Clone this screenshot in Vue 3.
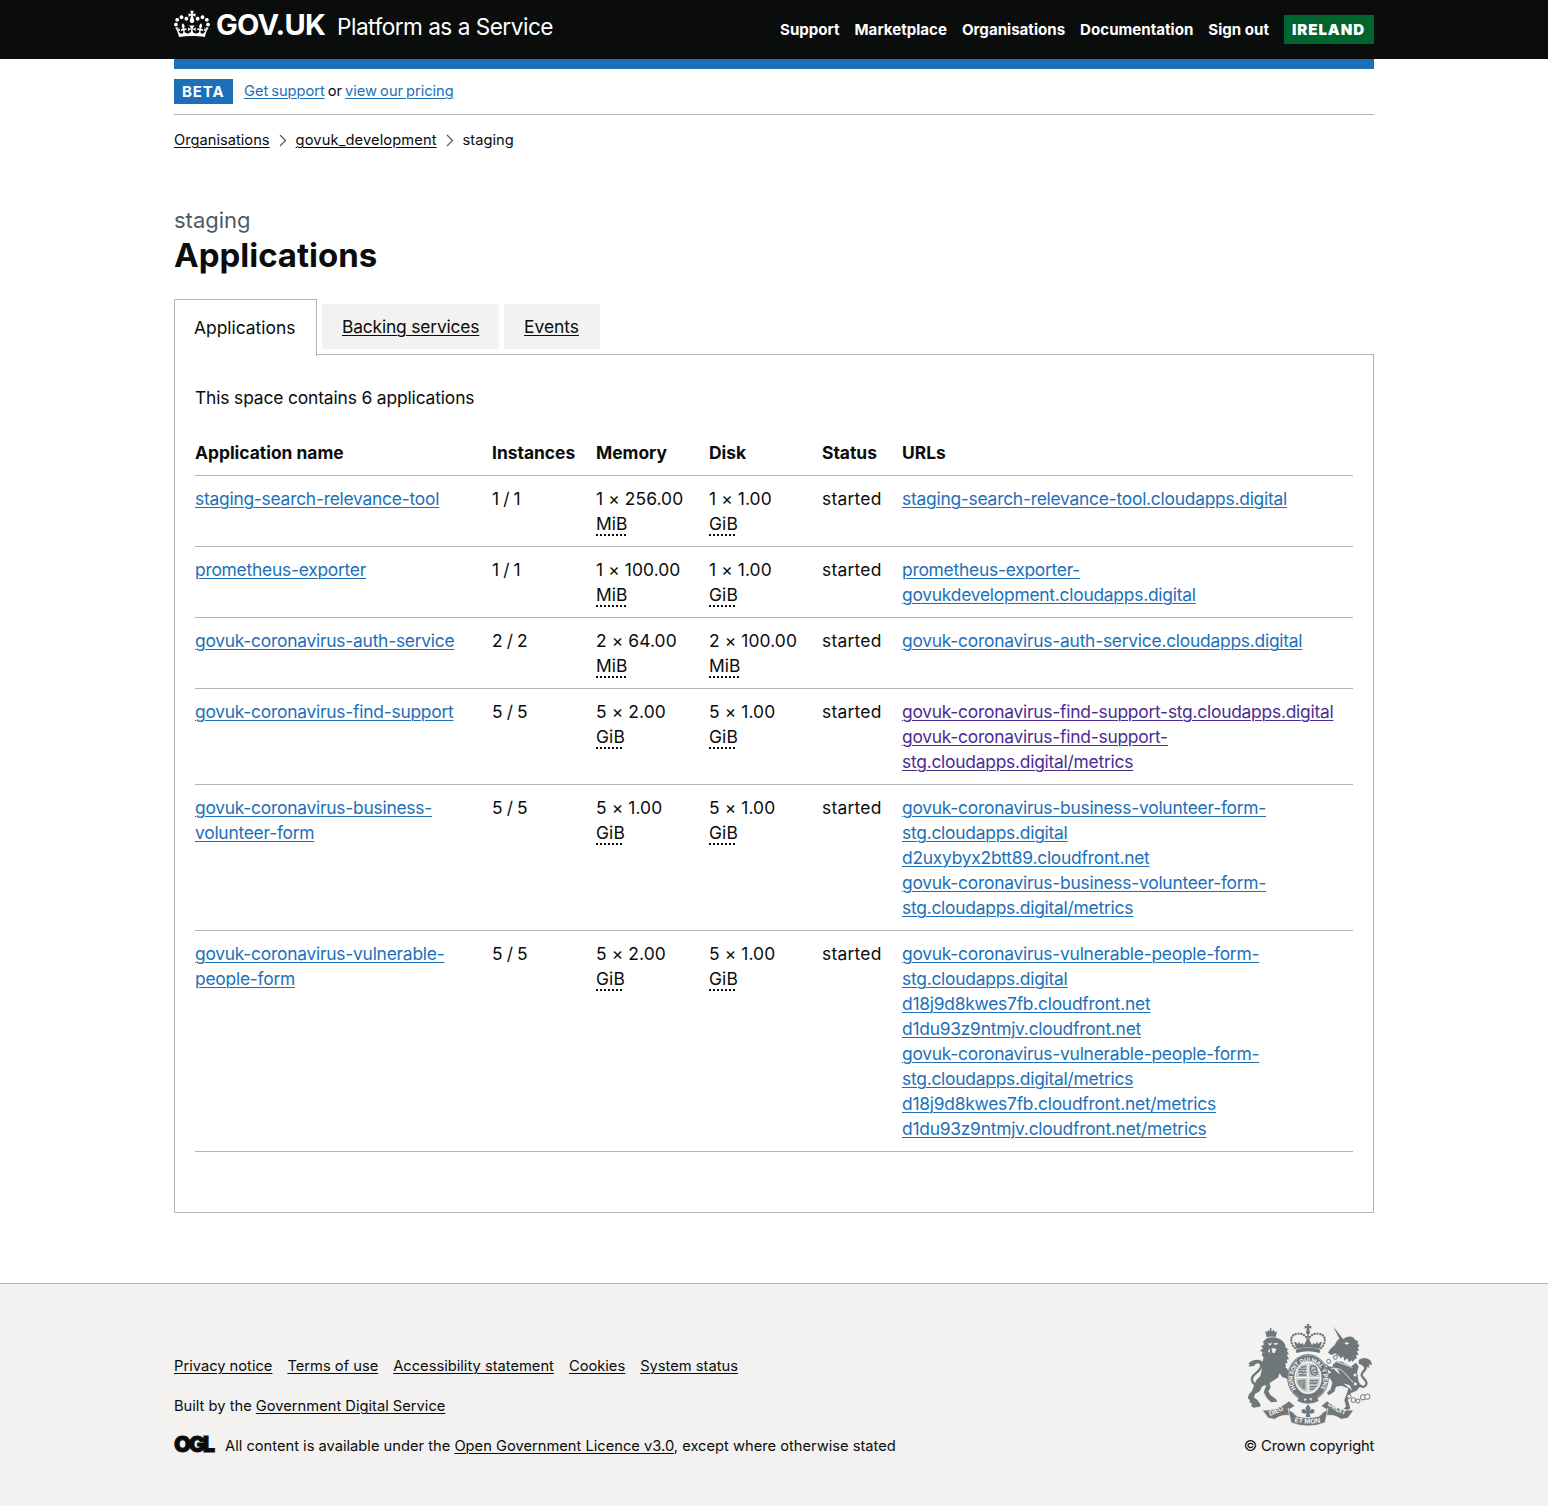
<script setup>
const navigation = ['Support', 'Marketplace', 'Organisations', 'Documentation', 'Sign out']
const footerLinks = ['Privacy notice', 'Terms of use', 'Accessibility statement', 'Cookies', 'System status']
const columns = ['Application name', 'Instances', 'Memory', 'Disk', 'Status', 'URLs']

const applications = [
  {
    name: 'staging-search-relevance-tool',
    instances: '1 / 1',
    memory: ['1 × 256.00', 'MiB'],
    disk: ['1 × 1.00', 'GiB'],
    urls: ['staging-search-relevance-tool.cloudapps.digital'],
  },
  {
    name: 'prometheus-exporter',
    instances: '1 / 1',
    memory: ['1 × 100.00', 'MiB'],
    disk: ['1 × 1.00', 'GiB'],
    urls: ['prometheus-exporter-govukdevelopment.cloudapps.digital'],
  },
  {
    name: 'govuk-coronavirus-auth-service',
    instances: '2 / 2',
    memory: ['2 × 64.00', 'MiB'],
    disk: ['2 × 100.00', 'MiB'],
    urls: ['govuk-coronavirus-auth-service.cloudapps.digital'],
  },
  {
    name: 'govuk-coronavirus-find-support',
    instances: '5 / 5',
    memory: ['5 × 2.00', 'GiB'],
    disk: ['5 × 1.00', 'GiB'],
    visited: true,
    urls: [
      'govuk-coronavirus-find-support-stg.cloudapps.digital',
      'govuk-coronavirus-find-support-stg.cloudapps.digital/metrics',
    ],
  },
  {
    name: 'govuk-coronavirus-business-volunteer-form',
    instances: '5 / 5',
    memory: ['5 × 1.00', 'GiB'],
    disk: ['5 × 1.00', 'GiB'],
    urls: [
      'govuk-coronavirus-business-volunteer-form-stg.cloudapps.digital',
      'd2uxybyx2btt89.cloudfront.net',
      'govuk-coronavirus-business-volunteer-form-stg.cloudapps.digital/metrics',
    ],
  },
  {
    name: 'govuk-coronavirus-vulnerable-people-form',
    instances: '5 / 5',
    memory: ['5 × 2.00', 'GiB'],
    disk: ['5 × 1.00', 'GiB'],
    urls: [
      'govuk-coronavirus-vulnerable-people-form-stg.cloudapps.digital',
      'd18j9d8kwes7fb.cloudfront.net',
      'd1du93z9ntmjv.cloudfront.net',
      'govuk-coronavirus-vulnerable-people-form-stg.cloudapps.digital/metrics',
      'd18j9d8kwes7fb.cloudfront.net/metrics',
      'd1du93z9ntmjv.cloudfront.net/metrics',
    ],
  },
]
</script>

<template>
  <div class="page">
    <header class="header">
      <div class="container header-inner">
        <a class="logo" href="#">
          <svg class="crown" viewBox="0 0 132 97" width="36" height="32" fill="currentColor" aria-hidden="true">
            <path fill-rule="evenodd" d="M25 30.2c3.5 1.5 7.7-.2 9.1-3.7 1.5-3.6-.2-7.8-3.9-9.2-3.6-1.4-7.6.3-9.1 3.9-1.4 3.5.3 7.5 3.9 9zM9 39.5c3.6 1.5 7.8-.2 9.2-3.7 1.5-3.6-.2-7.8-3.9-9.1-3.6-1.5-7.6.2-9.1 3.8-1.4 3.5.3 7.5 3.8 9zM4.4 57.2c3.5 1.5 7.7-.2 9.1-3.8 1.5-3.6-.2-7.7-3.9-9.1-3.5-1.5-7.6.3-9.1 3.8-1.4 3.5.3 7.6 3.9 9.1zm38.3-21.4c3.5 1.5 7.7-.2 9.1-3.8 1.5-3.6-.2-7.7-3.9-9.1-3.6-1.5-7.6.3-9.1 3.8-1.3 3.6.4 7.7 3.9 9.1zm64.4-5.6c-3.6 1.5-7.8-.2-9.1-3.7-1.5-3.6.2-7.8 3.8-9.2 3.6-1.4 7.7.3 9.2 3.9 1.3 3.5-.4 7.5-3.9 9zm15.9 9.3c-3.6 1.5-7.7-.2-9.1-3.7-1.5-3.6.2-7.8 3.7-9.1 3.6-1.5 7.7.2 9.2 3.8 1.5 3.5-.3 7.5-3.8 9zm4.7 17.7c-3.6 1.5-7.8-.2-9.2-3.8-1.5-3.6.2-7.7 3.9-9.1 3.6-1.5 7.7.3 9.2 3.8 1.3 3.5-.4 7.6-3.9 9.1zM89.3 35.8c-3.6 1.5-7.8-.2-9.2-3.8-1.4-3.6.2-7.7 3.9-9.1 3.6-1.5 7.7.3 9.2 3.8 1.4 3.6-.3 7.7-3.9 9.1zM69.7 17.7l8.9 4.7V9.3l-8.9 2.8c-.2-.3-.5-.6-.9-.9L72.4 0H59.6l3.5 11.2c-.3.3-.6.5-.9.9l-8.8-2.8v13.1l8.8-4.7c.3.3.6.7.9.9l-5 15.4v.1c-.2.8-.4 1.6-.4 2.4 0 4.1 3.1 7.5 7 8.1h.2c.3 0 .7.1 1 .1.4 0 .7 0 1-.1h.2c4-.6 7.1-4.1 7.1-8.1 0-.8-.1-1.7-.4-2.4V34l-5.1-15.4c.4-.2.7-.6 1-.9zM66 92.8c16.9 0 32.8 1.1 47.1 3.2 4-16.9 8.9-26.7 14-33.5l-9.6-3.4c1 4.9 1.1 7.2 0 10.2-1.5-1.4-3-4.3-4.2-8.7L108.6 76c2.8-2 5-3.2 7.5-3.3-4.4 9.4-10 11.9-13.6 11.2-4.3-.8-6.3-4.6-5.6-7.9 1-4.7 5.7-5.9 8-.5 4.3-8.7-3-11.4-7.6-8.8 7.1-7.2 7.9-13.5 2.1-21.1-8 6.1-8.1 12.3-4.5 20.8-4.7-5.4-12.1-2.5-9.5 6.2 3.4-5.2 7.9-2 7.2 3.1-.6 4.3-6.4 7.8-13.5 7.2-10.3-.9-10.9-8-11.2-13.8 2.5-.5 7.1 1.8 11 7.3L80.2 60c-4.1 4.4-8 5.3-12.3 5.4 1.4-4.4 8-11.6 8-11.6H55.5s6.4 7.2 7.9 11.6c-4.2-.1-8-1-12.3-5.4l1.4 16.4c3.9-5.5 8.5-7.7 10.9-7.3-.3 5.8-.9 12.8-11.1 13.8-7.2.6-12.9-2.9-13.5-7.2-.7-5 3.8-8.3 7.1-3.1 2.7-8.7-4.6-11.6-9.4-6.2 3.7-8.5 3.6-14.7-4.6-20.8-5.8 7.6-5 13.9 2.2 21.1-4.7-2.6-11.9.1-7.7 8.8 2.3-5.5 7.1-4.2 8.1.5.7 3.3-1.3 7.1-5.7 7.9-3.5.7-9-1.8-13.5-11.2 2.5.1 4.7 1.3 7.5 3.3l-4.7-15.4c-1.2 4.4-2.7 7.2-4.3 8.7-1.1-3-.9-5.3 0-10.2l-9.5 3.4c5 6.9 9.9 16.7 14 33.5 14.8-2.1 30.8-3.2 47.7-3.2z" />
          </svg>
          <span class="wordmark">GOV.UK</span>
          <span class="product">Platform as a Service</span>
        </a>
        <nav class="navigation">
          <a v-for="item in navigation" :key="item" href="#">{{ item }}</a>
          <strong class="region">IRELAND</strong>
        </nav>
      </div>
    </header>

    <div class="container">
      <div class="phase">
        <strong class="phase-tag">BETA</strong>
        <span class="phase-text"><a class="link" href="#">Get support</a> or <a class="link" href="#">view our pricing</a></span>
      </div>

      <nav class="breadcrumbs">
        <a href="#">Organisations</a>
        <svg width="8" height="13" viewBox="0 0 8 13" aria-hidden="true"><path d="M1 1l5.5 5.5L1 12" /></svg>
        <a class="crumb-org" href="#">govuk_development</a>
        <svg width="8" height="13" viewBox="0 0 8 13" aria-hidden="true"><path d="M1 1l5.5 5.5L1 12" /></svg>
        <span>staging</span>
      </nav>

      <main>
        <h1><span class="caption">staging</span> Applications</h1>

        <div class="tabs">
          <a class="tab tab-selected" href="#">Applications</a>
          <a class="tab tab-services" href="#">Backing services</a>
          <a class="tab tab-events" href="#">Events</a>
        </div>

        <section class="panel">
          <p class="summary">This space contains 6 applications</p>
          <table>
            <colgroup>
              <col class="col-name" />
              <col class="col-instances" />
              <col class="col-size" />
              <col class="col-size" />
              <col class="col-status" />
              <col />
            </colgroup>
            <thead>
              <tr>
                <th v-for="column in columns" :key="column">{{ column }}</th>
              </tr>
            </thead>
            <tbody>
              <tr v-for="app in applications" :key="app.name">
                <td class="names"><a class="link" href="#">{{ app.name }}</a></td>
                <td class="count">{{ app.instances }}</td>
                <td>{{ app.memory[0] }}<br /><abbr>{{ app.memory[1] }}</abbr></td>
                <td>{{ app.disk[0] }}<br /><abbr>{{ app.disk[1] }}</abbr></td>
                <td class="status">started</td>
                <td class="names">
                  <div v-for="url in app.urls" :key="url">
                    <a class="link" :class="{ visited: app.visited }" href="#">{{ url }}</a>
                  </div>
                </td>
              </tr>
            </tbody>
          </table>
        </section>
      </main>
    </div>

    <footer class="footer">
      <div class="container footer-inner">
        <div class="footer-meta">
          <div class="footer-links">
            <a v-for="item in footerLinks" :key="item" href="#">{{ item }}</a>
          </div>
          <p class="built">Built by the <a href="#">Government Digital Service</a></p>
          <div class="licence">
            <span class="ogl">OGL</span>
            <span>All content is available under the <a href="#">Open Government Licence v3.0</a>, except where otherwise stated</span>
          </div>
        </div>

        <div class="copyright">
          <svg class="crest" width="125" height="102" viewBox="30 27 375 306" aria-hidden="true">
            <defs>
              <path id="motto-arc" d="M178 222A46 50 0 1 1 250 220" />
              <path id="dieu-arc" d="M98 302Q130 296 153 272" />
              <path id="mon-arc" d="M172 321Q213 331 256 321" />
              <path id="droit-arc" d="M272 269Q296 294 334 302" />
            </defs>
            <!-- imperial crown -->
            <g class="solid">
              <path d="M209 27h9l-2 7 7-2v9l-7-2 2 8h-10l2-8-7 2v-9l8 2z" />
              <circle cx="213" cy="52" r="6" />
              <path d="M176 104q37-13 74 0l-2 10q-35-10-70 0z" />
              <path d="M171 82l6-2 4 8 5-8 5 8 6-5 4 8 6-13 6-6 6 6 6 13 4-8 6 5 5-8 5 8 4-8 6 2-8 20q-34-10-68 0z" />
            </g>
            <g class="beads">
              <path d="M174 99C155 80 161 58 181 56c15-2 26 6 31 18M252 99c19-19 13-41-7-43-15-2-26 6-31 18M213 56v40" />
            </g>
            <!-- lion -->
            <g class="solid">
              <path d="M84 47l7 5 2-8 6 5 1-8 5 8 6-5 2 8 7-4-4 19q-14-5-27 0z" />
              <circle cx="101" cy="42" r="3" />
              <path d="M89 70q13-6 28-2 16 3 23 14 6 7 5 14l9 8-5 3 7 11-7 1 7 13-7 2 3 10-7 1 2 9-6 4 9 8 12 6 7 9-5 10-12 2-14-8-11-10-3 12-11 7-15 10 3 14-7 11 7 12 15 10 5 9-19 2-12-12-10-18 8-22-12 4-8 15-14 8-3 10 11 9 9 13-2 6-19 3-8-5 3-7-8-4 2-6-7-6 4-12 9-10 7-19 6-14 12-12 4-17 1-21 5-18-6-6 3-9-8-5 9-7-6-7 9-4-3-9 6-6z" />
              <path d="M131 145l20 17 8 18-10 9-13-2-5-8 13 1-8-12-12-7z" />
              <path d="M34 146q9-12 28-12 17 1 16 15-10-7-22-2-3 9-22 7l5-6z" />
            </g>
            <path class="tail" d="M68 142c12 13-2 26-15 36-16 14-6 35 13 29l13-8" />
            <path class="light" d="M92 83l7 3 6-4-3 8-5 1zM109 86l8-3 7 3-8 4zM103 101l8-2 7 4-5 11-6 0zM98 100l-5 10 6 3zM99 197l5 19-8 12 8-14z" />
            <!-- unicorn -->
            <g class="solid">
              <path d="M288 34l31 39-8 6z" />
              <path d="M317 73q17-14 33-5l5 7 8 3-1 8 6 7-6 4 4 9-6 3 4 10-7 2 3 9-5 1-14 16-28-3-12-17-4-12-15 5-9-7 7-11 13-12 8-14 10-6z" />
              <path d="M300 138l42 16 15-11 8 11-5 19 4 22 6 19-11 13-18 8-8 21 7 24-10 7-13-2 10-11-5-19 8-21 4-14-21-8-16 3-5 15-17 11-5-8 11-11 5-19-7-13-15 2-13 5-6-8 6-8 20-2 12-7-13-9-8 10-9-3 3-13 12-6 17 6 4-9z" />
              <path d="M365 135q21-13 37 3l3 13-10-3 3 11-10-5-5 7q-5-12-18-15z" />
            </g>
            <path class="tail" d="M371 145c22-6 20 13 7 26-15 17 19 23 9 39-6 10-18 5-22-4" />
            <path class="light" d="M302 119l10 11 7-6 3 13 9-7 5 12 8-6 4 9-3 7-47-18zM322 84l9-3 5 5-8 3zM287 156l15 8 8 15-13-10zM318 205l20 6 8 16-12-10z" />
            <path class="harness" d="M298 140l48 17M281 162q24-8 42 12t34 38M303 128q-12-2-14 14" />
            <g class="chain">
              <circle cx="295" cy="127" r="6" />
              <circle cx="275" cy="139" r="6" />
              <circle cx="267" cy="154" r="5" />
              <circle cx="354" cy="180" r="6" />
              <circle cx="355" cy="207" r="6" />
              <circle cx="336" cy="244" r="6" />
              <circle cx="349" cy="255" r="7" />
              <circle cx="363" cy="258" r="6" />
              <circle cx="378" cy="247" r="8" />
              <circle cx="391" cy="245" r="8" />
            </g>
            <!-- garter and shield -->
            <ellipse class="garter-edge" cx="213" cy="188" rx="61" ry="69" />
            <ellipse class="garter" cx="213" cy="188" rx="50" ry="58" />
            <ellipse class="shield" cx="213" cy="188" rx="38" ry="45" />
            <path class="quarters" d="M213 143v90M175 188h76" />
            <path class="lions" d="M184 163h24M185 172l7-3 6 4 9-3M186 180h22M191 154l6 3 11-3M222 154q10-5 16 4l3 18q-8 9-17 0-6-10-2-22M225 167l12-5M227 173h13M219 197h24M218 206l8-3 7 3 8-3M219 215h20M220 223l12-2" />
            <path class="harp" d="M183 198l20-3v27q-14-2-20-24M188 198l4 14M194 197l3 20M199 197v24" />
            <path class="solid" d="M188 245h50l8 12q-33 18-66 0z" />
            <path class="light" d="M202 250l8 4-8 4zM216 252l8-4v9z" />
            <!-- fleur and ribbons -->
            <path class="solid" d="M213 268l8 12-4 9q9-12 15-3 3 8-8 10l-6-2 2 12h-14l2-12-6 2q-11-2-8-10 6-9 15 3l-4-9z" />
            <path class="ribbon" d="M76 285q43 4 80-27l18 15-20 12 13 19q-28-10-54 9l-20-4z" />
            <path class="ribbon" d="M350 285q-43 4-80-27l-18 15 20 12-13 19q28-10 54 9l20-4z" />
            <path class="ribbon" d="M153 280q15 12 27 24 33 9 66 0 12-12 27-24l-9 43q-51 20-102 0z" />
            <path class="folds" d="M158 288q21-1 17 12M268 288q-21-1-17 12" />
            <text class="motto"><textPath href="#motto-arc" textLength="226">HONI SOIT QUI MAL Y PENSE</textPath></text>
            <text class="scroll"><textPath href="#dieu-arc">DIEU</textPath></text>
            <text class="scroll"><textPath href="#mon-arc">ET MON</textPath></text>
            <text class="scroll"><textPath href="#droit-arc">DROIT</textPath></text>
          </svg>
          <span>© Crown copyright</span>
        </div>
      </div>
    </footer>
  </div>
</template>

<style>
body {
  margin: 0;
  background: #fff;
}
</style>

<style scoped>
.page {
  min-height: 1506px;
  display: flex;
  flex-direction: column;
  color: #0b0c0c;
  font-family: Inter, 'Liberation Sans', sans-serif;
  font-size: 17.4px;
  line-height: 25px;
  font-variant-ligatures: none;
}
.container {
  width: 1200px;
  margin: 0 auto;
}
a {
  color: inherit;
  text-decoration: underline;
  text-decoration-thickness: 1px;
  text-underline-offset: 2px;
}
.link {
  color: #1d70b8;
}
.visited {
  color: #4c2c92;
}

.header {
  height: 59px;
  background: #0b0c0c;
  color: #fff;
}
.header-inner {
  height: 59px;
  display: flex;
  justify-content: space-between;
}
.header a {
  text-decoration: none;
}
.logo {
  display: flex;
  white-space: nowrap;
}
.crown {
  margin-top: 8px;
}
.wordmark {
  margin: 9px 0 0 6px;
  width: 121px;
  font-size: 29px;
  font-weight: 700;
  line-height: 31px;
  letter-spacing: -0.75px;
}
.product {
  margin-top: 12px;
  font-size: 22.6px;
  line-height: 30px;
  letter-spacing: -0.5px;
}
.navigation {
  display: flex;
  align-items: center;
  gap: 15px;
  font-size: 15.1px;
  font-weight: 700;
}
.region {
  box-sizing: border-box;
  width: 90px;
  height: 29px;
  padding-left: 8px;
  background: #00642f;
  line-height: 29px;
  letter-spacing: 0.9px;
}

.phase {
  display: flex;
  align-items: center;
  gap: 11px;
  height: 45px;
  border-top: 10px solid #1d70b8;
  border-bottom: 1px solid #b1b4b6;
  font-size: 14.7px;
}
.phase-tag {
  box-sizing: border-box;
  width: 59px;
  height: 25px;
  padding-left: 8px;
  background: #1d70b8;
  color: #fff;
  font-size: 15px;
  letter-spacing: 0.9px;
}
.phase-text {
  letter-spacing: -0.05px;
  word-spacing: -1px;
}
.breadcrumbs {
  display: flex;
  align-items: center;
  height: 20px;
  margin-top: 15px;
  font-size: 14.7px;
  line-height: 20px;
}
.breadcrumbs svg {
  margin: 0 9px;
  fill: none;
  stroke: #505a5f;
  stroke-width: 1.2;
}
.crumb-org {
  letter-spacing: 0.1px;
}

h1 {
  margin: 55px 0 24px;
  font-size: 33px;
  line-height: 40px;
  font-weight: 700;
}
.caption {
  display: block;
  color: #505a5f;
  font-size: 22px;
  line-height: 30px;
  font-weight: 400;
}

.tabs {
  display: flex;
  align-items: center;
  gap: 5px;
  height: 55px;
}
.tab {
  box-sizing: border-box;
  height: 45px;
  padding: 10px 20px;
  background: #f3f2f1;
  white-space: nowrap;
}
.tab-selected {
  position: relative;
  width: 143px;
  height: 57px;
  margin-bottom: -2px;
  padding: 15px 19px;
  border: 1px solid #b1b4b6;
  border-bottom: 0;
  background: #fff;
  text-decoration: none;
}
.tab-services {
  width: 177px;
  letter-spacing: -0.17px;
}
.tab-events {
  width: 96px;
}
.panel {
  height: 797px;
  padding: 30px 20px;
  border: 1px solid #b1b4b6;
}
.summary {
  margin: 0 0 20px;
  letter-spacing: -0.14px;
}
table {
  width: 1158px;
  table-layout: fixed;
  border-collapse: collapse;
}
.col-name {
  width: 297px;
}
.col-instances {
  width: 104px;
}
.col-size {
  width: 113px;
}
.col-status {
  width: 80px;
}
th,
td {
  padding: 10px 20px 10px 0;
  border-bottom: 1px solid #b1b4b6;
  text-align: left;
  vertical-align: top;
}
th {
  font-weight: 700;
}
td {
  white-space: nowrap;
  letter-spacing: 0.1px;
}
th:last-child,
td:last-child {
  padding-right: 0;
}
.names {
  white-space: normal;
  letter-spacing: -0.24px;
}
.count {
  word-spacing: -1px;
}
.status {
  letter-spacing: 0.24px;
}
abbr {
  text-decoration: underline dotted 2px;
  text-underline-offset: 4px;
  text-decoration-skip-ink: none;
}

.footer {
  flex: 1;
  margin-top: 70px;
  border-top: 1px solid #b1b4b6;
  background: #f3f2f1;
  font-size: 14.7px;
  line-height: 20px;
}
.footer-inner {
  display: flex;
  justify-content: space-between;
  padding-top: 40px;
}
.footer-meta {
  display: flex;
  flex-direction: column;
  gap: 20px;
  padding-top: 32px;
}
.footer-links {
  display: flex;
  gap: 15px;
}
.built {
  margin: 0;
}
.licence {
  display: flex;
}
.ogl {
  width: 51px;
  font-size: 22px;
  line-height: 17px;
  font-weight: 900;
  letter-spacing: -2.4px;
  -webkit-text-stroke: 0.8px #0b0c0c;
}
.copyright {
  display: flex;
  flex-direction: column;
  align-items: center;
  gap: 10px;
  width: 130px;
  letter-spacing: -0.15px;
  white-space: nowrap;
}

.solid {
  fill: #6f777b;
}
.light {
  fill: #f3f2f1;
}
.beads {
  fill: none;
  stroke: #6f777b;
  stroke-width: 7;
  stroke-linecap: round;
  stroke-dasharray: 0.5 8;
}
.tail {
  fill: none;
  stroke: #6f777b;
  stroke-width: 7;
}
.chain {
  fill: #f3f2f1;
  stroke: #6f777b;
  stroke-width: 3;
}
.harness,
.folds {
  fill: none;
  stroke: #f3f2f1;
  stroke-width: 2.5;
}
.garter-edge {
  fill: #f3f2f1;
  stroke: #6f777b;
  stroke-width: 3;
}
.garter {
  fill: none;
  stroke: #6f777b;
  stroke-width: 18;
}
.shield {
  fill: #c3c7c8;
  stroke: #f3f2f1;
  stroke-width: 3;
}
.quarters {
  stroke: #f3f2f1;
  stroke-width: 4;
}
.lions,
.harp {
  fill: none;
  stroke: #6f777b;
  stroke-width: 4;
}
.harp {
  stroke-width: 2.5;
}
.ribbon {
  fill: #6f777b;
  stroke: #f3f2f1;
  stroke-width: 2;
}
.motto,
.scroll {
  fill: #f3f2f1;
  font-weight: 700;
  letter-spacing: 0;
}
.motto {
  font-size: 17px;
}
.scroll {
  font-size: 20px;
}
</style>
